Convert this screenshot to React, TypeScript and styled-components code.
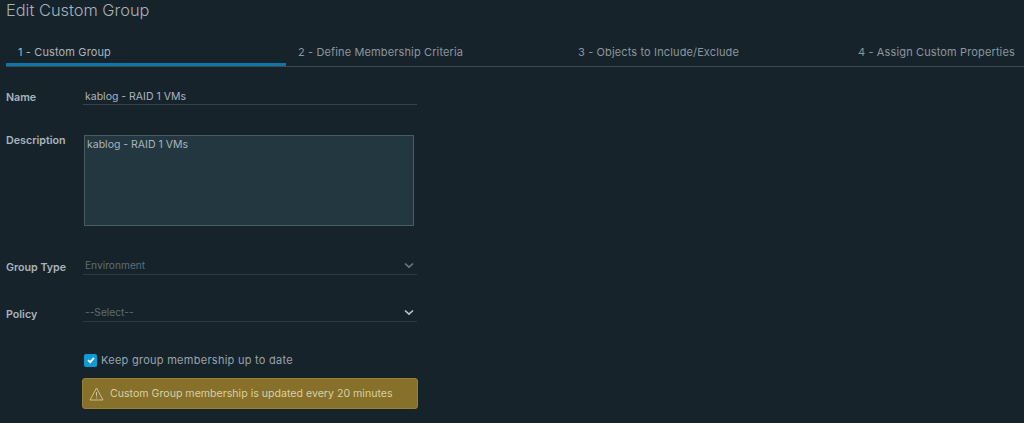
import React from 'react'
import styled, { createGlobalStyle } from 'styled-components'

const GlobalStyle = createGlobalStyle`
  html, body {
    margin: 0;
    background: #17232b;
  }
`

const tabs = [
  '1 - Custom Group',
  '2 - Define Membership Criteria',
  '3 - Objects to Include/Exclude',
  '4 - Assign Custom Properties',
]

function Chevron({ dim }: { dim?: boolean }) {
  return (
    <ChevronIcon viewBox="0 0 10 7" $dim={dim}>
      <path d="M1 1.5 L5 5.2 L9 1.5" />
    </ChevronIcon>
  )
}

function App() {
  return (
    <Page>
      <GlobalStyle />
      <Title>Edit Custom Group</Title>
      <TabBar>
        {tabs.map((tab, i) => (
          <Tab key={tab} $active={i === 0}>{tab}</Tab>
        ))}
      </TabBar>
      <Form>
        <NameRow>
          <Label>Name</Label>
          <TextInput>kablog - RAID 1 VMs</TextInput>
        </NameRow>
        <DescriptionRow>
          <Label>Description</Label>
          <TextArea>kablog - RAID 1 VMs</TextArea>
        </DescriptionRow>
        <SelectRow>
          <SelectLabel>Group Type</SelectLabel>
          <Select>
            Environment
            <Chevron dim />
          </Select>
        </SelectRow>
        <PolicyRow>
          <SelectLabel>Policy</SelectLabel>
          <Select>
            --Select--
            <Chevron />
          </Select>
        </PolicyRow>
        <CheckRow>
          <CheckBox>
            <svg viewBox="0 0 12 12" width="12" height="12">
              <path d="M3 6.2 L5.2 8.2 L9 3.9" fill="none" stroke="#fff" strokeWidth="1.8" />
            </svg>
          </CheckBox>
          <CheckLabel>Keep group membership up to date</CheckLabel>
        </CheckRow>
        <Alert>
          <svg viewBox="0 0 15 14" width="15" height="14">
            <path
              d="M7.5 1 L14 13 H1 Z M7.5 5 V9.4 M7.5 10.4 V11.4"
              fill="none"
              stroke="#d3c99d"
              strokeWidth="0.9"
              strokeLinejoin="round"
            />
          </svg>
          <AlertText>Custom Group membership is updated every 20 minutes</AlertText>
        </Alert>
      </Form>
    </Page>
  )
}

const Page = styled.div`
  width: 1024px;
  height: 423px;
  overflow: hidden;
  box-sizing: border-box;
  padding-left: 6px;
  font-family: Inter, "Open Sans", sans-serif;
  font-size: 10.5px;
  color: #b4bfc6;
`

const Title = styled.h1`
  margin: 0;
  height: 37px;
  font-size: 16.4px;
  line-height: 20px;
  font-weight: 300;
  color: #a6b1b8;
`

const TabBar = styled.div`
  display: flex;
  height: 29px;
  border-bottom: 1px solid #3c4a52;
`

const Tab = styled.div<{ $active?: boolean }>`
  box-sizing: border-box;
  width: 280px;
  height: 29px;
  padding: 7px 0 0 12px;
  flex: none;
  white-space: nowrap;
  font-size: 11px;
  line-height: 16px;
  letter-spacing: 0.13px;
  color: ${p => (p.$active ? '#a9b4bb' : '#8a969d')};
  border-bottom: ${p => (p.$active ? '3px solid #0f75a8' : 'none')};
`

const Form = styled.div`
  display: flex;
  flex-direction: column;
  padding-top: 20px;
`

const Row = styled.div`
  display: flex;
`

const NameRow = styled(Row)`
  height: 18px;
`

const DescriptionRow = styled(Row)`
  margin-top: 25px;
  height: 96px;
`

const SelectRow = styled(Row)`
  margin-top: 30px;
  height: 20px;
`

const PolicyRow = styled(Row)`
  margin-top: 27px;
  height: 20px;
`

const Label = styled.div`
  width: 77px;
  flex: none;
  padding-top: 3px;
  line-height: 15px;
  font-size: 10.7px;
  font-weight: 600;
  color: #a9b4bb;
`

const SelectLabel = styled(Label)`
  padding-top: 4px;
`

const TextInput = styled.div`
  box-sizing: border-box;
  width: 334px;
  height: 18px;
  padding: 2px 0 0 2px;
  line-height: 15px;
  border-bottom: 1px solid #36444c;
  color: #a9b4bb;
`

const TextArea = styled.div`
  box-sizing: border-box;
  width: 330px;
  height: 91px;
  margin: 5px 0 0 1px;
  padding: 1px 2px;
  line-height: 15px;
  background: #233740;
  border: 1px solid #4a5b63;
  color: #a9b4bb;
`

const Select = styled.div`
  box-sizing: border-box;
  width: 334px;
  height: 19px;
  padding: 0 3px 0 2px;
  display: flex;
  align-items: center;
  justify-content: space-between;
  font-size: 10.2px;
  border-bottom: 1px solid #2d3a42;
  color: #5e6d75;
`

const ChevronIcon = styled.svg<{ $dim?: boolean }>`
  width: 10px;
  height: 7px;
  fill: none;
  stroke: ${p => (p.$dim ? '#6b7a82' : '#b8c3ca')};
  stroke-width: 1.6;
`

const CheckRow = styled.div`
  display: flex;
  align-items: center;
  gap: 4px;
  margin: 30px 0 0 78px;
  height: 14px;
`

const CheckBox = styled.div`
  box-sizing: border-box;
  width: 13px;
  height: 13px;
  border-radius: 2px;
  background: #0d9ad6;
  display: flex;
  align-items: center;
  justify-content: center;
`

const CheckLabel = styled.span`
  font-size: 11px;
  letter-spacing: 0.27px;
  color: #97a3aa;
`

const Alert = styled.div`
  box-sizing: border-box;
  display: flex;
  align-items: center;
  gap: 6px;
  margin: 11px 0 0 76px;
  width: 336px;
  height: 31px;
  padding-left: 6px;
  background: #86702a;
  border: 1px solid #97803a;
  border-radius: 3px;
`

const AlertText = styled.span`
  font-size: 10.6px;
  color: #d9cfa6;
`

export default App
